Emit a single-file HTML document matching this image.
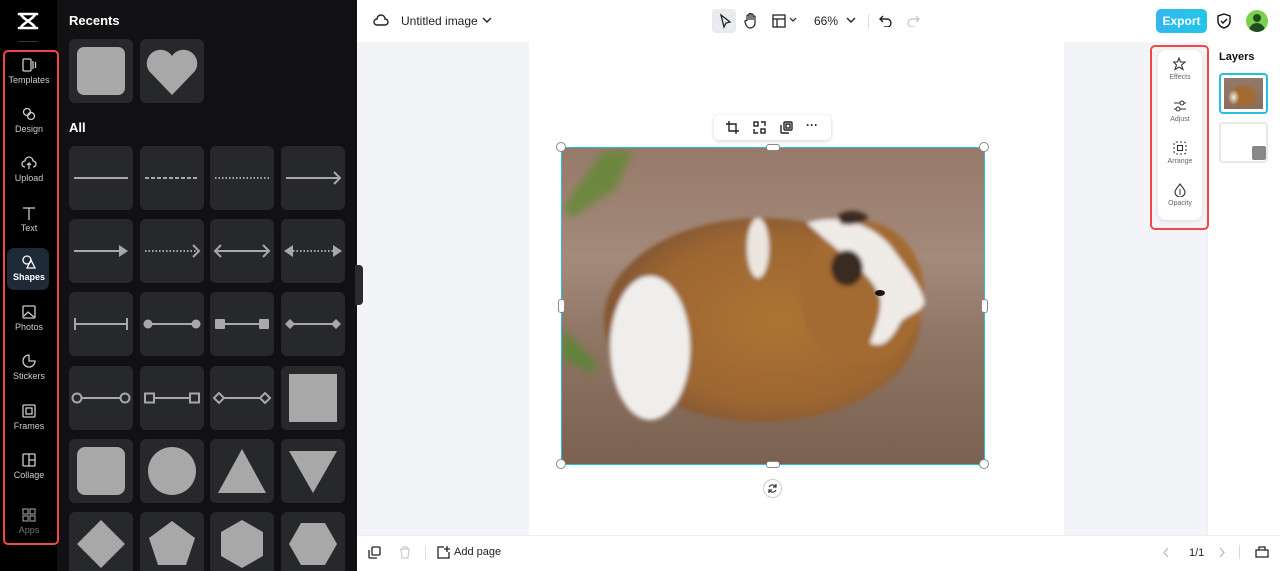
<!DOCTYPE html><html><head><style>
*{margin:0;padding:0;box-sizing:border-box}
html,body{width:1280px;height:571px;overflow:hidden}
body{font-family:"Liberation Sans",sans-serif;background:#f2f4f7;position:relative}
.a{position:absolute}
.rail{left:0;top:0;width:57px;height:571px;background:#000}
.panel{left:57px;top:0;width:300px;height:571px;background:#111113}
.ri{position:absolute;left:4px;width:50px;text-align:center;color:#ccc;font-size:9px}
.ri svg{display:block;margin:0 auto 2px}
.tile{position:absolute;width:64px;height:64px;background:#27282b;border-radius:6px;overflow:hidden}
.g{fill:#a8a8a8}
.sw{stroke:#a8a8a8;stroke-width:2;fill:none}
.tool{color:#666;font-size:7px;text-align:center;position:absolute;left:0;width:44px}
.tool svg{display:block;margin:0 auto 3px}
</style></head><body>
<div class="a rail"></div>
<div class="a panel"></div>
<svg class="a" style="left:16px;top:11px" width="24" height="20" viewBox="0 0 24 20"><path d="M3 3h18M3 17h18M5 3c0 4 14 10 14 14M19 3c0 4-14 10-14 14" stroke="#fff" stroke-width="2.6" fill="none" stroke-linecap="round"/></svg>
<div class="a" style="left:18px;top:41px;width:20px;height:1px;background:#333"></div>
<div class="a" style="left:3px;top:50px;width:56px;height:495px;border:2.5px solid #f04848;border-radius:5px"></div>
<div class="a" style="left:7px;top:248px;width:42px;height:42px;background:#1e2a38;border-radius:7px"></div>
<div class="ri" style="top:57px"><svg width="16" height="16"><rect x="2" y="2" width="8" height="12" rx="1" style="stroke:#ccc;fill:none;stroke-width:1.3"/><path d="M12 4v8M14.5 5v6" style="stroke:#ccc;stroke-width:1.3"/></svg>Templates</div>
<div class="ri" style="top:106px"><svg width="16" height="16"><circle cx="6" cy="6" r="3.5" style="stroke:#ccc;fill:none;stroke-width:1.3"/><circle cx="10" cy="10" r="3.5" style="stroke:#ccc;fill:none;stroke-width:1.3"/></svg>Design</div>
<div class="ri" style="top:155px"><svg width="16" height="16"><path d="M4 12a3 3 0 0 1 0-6a4 4 0 0 1 8 0a3 3 0 0 1 0 6M8 14V8M6 10l2-2 2 2" style="stroke:#ccc;fill:none;stroke-width:1.3"/></svg>Upload</div>
<div class="ri" style="top:205px"><svg width="16" height="16"><path d="M2 3h12M8 3v12" style="stroke:#ccc;fill:none;stroke-width:1.3"/></svg>Text</div>
<div class="ri" style="top:254px;color:#fff;font-weight:bold"><svg width="16" height="16"><circle cx="6" cy="6" r="4" style="stroke:#fff;fill:none;stroke-width:1.3"/><path d="M10 6l4 8H6z" style="stroke:#fff;fill:none;stroke-width:1.3"/></svg>Shapes</div>
<div class="ri" style="top:304px"><svg width="16" height="16"><rect x="2" y="2" width="12" height="12" rx="1" style="stroke:#ccc;fill:none;stroke-width:1.3"/><path d="M3 12l4-4 6 5" style="stroke:#ccc;fill:none;stroke-width:1.3"/></svg>Photos</div>
<div class="ri" style="top:353px"><svg width="16" height="16"><path d="M8 2a6 6 0 1 0 6 6h-6z" style="stroke:#ccc;fill:none;stroke-width:1.3"/></svg>Stickers</div>
<div class="ri" style="top:403px"><svg width="16" height="16"><rect x="2" y="2" width="12" height="12" rx="1" style="stroke:#ccc;fill:none;stroke-width:1.3"/><rect x="5" y="5" width="6" height="6" style="stroke:#ccc;fill:none;stroke-width:1.3"/></svg>Frames</div>
<div class="ri" style="top:452px"><svg width="16" height="16"><rect x="2" y="2" width="12" height="12" rx="1" style="stroke:#ccc;fill:none;stroke-width:1.3"/><path d="M8 2v12M8 8h6" style="stroke:#ccc;fill:none;stroke-width:1.3"/></svg>Collage</div>
<div class="ri" style="top:507px;color:#777"><svg width="16" height="16"><g style="stroke:#888;fill:none;stroke-width:1.3"><rect x="2" y="2" width="5" height="5"/><rect x="9" y="2" width="5" height="5"/><rect x="2" y="9" width="5" height="5"/><rect x="9" y="9" width="5" height="5"/></g></svg>Apps</div>

<div class="a" style="left:69px;top:13px;color:#fff;font-weight:bold;font-size:13px">Recents</div>
<div class="tile" style="left:69px;top:39px"><div class="a" style="left:8px;top:8px;width:48px;height:48px;background:#a8a8a8;border-radius:7px"></div></div>
<div class="tile" style="left:140px;top:39px"><svg width="64" height="64"><path class="g" d="M32 56L9 32A13 13 0 0 1 32 17A13 13 0 0 1 55 32z"/></svg></div>
<div class="a" style="left:69px;top:120px;color:#fff;font-weight:bold;font-size:13px">All</div>
<div class="tile" style="left:69px;top:146px"><svg width="64" height="64"><path class="sw" d="M5 32h54"/></svg></div>
<div class="tile" style="left:140px;top:146px"><svg width="64" height="64"><path class="sw" d="M5 32h54" stroke-dasharray="4 2"/></svg></div>
<div class="tile" style="left:210px;top:146px"><svg width="64" height="64"><path class="sw" d="M5 32h54" stroke-dasharray="1.5 2"/></svg></div>
<div class="tile" style="left:281px;top:146px"><svg width="64" height="64"><path class="sw" d="M5 32h54M53 26l6 6-6 6"/></svg></div>
<div class="tile" style="left:69px;top:219px"><svg width="64" height="64"><path class="sw" d="M5 32h48"/><path class="g" d="M50 26l9 6-9 6z"/></svg></div>
<div class="tile" style="left:140px;top:219px"><svg width="64" height="64"><path class="sw" d="M5 32h54" stroke-dasharray="1.5 2"/><path class="sw" d="M53 26l6 6-6 6"/></svg></div>
<div class="tile" style="left:210px;top:219px"><svg width="64" height="64"><path class="sw" d="M5 32h54M53 26l6 6-6 6M11 26l-6 6 6 6"/></svg></div>
<div class="tile" style="left:281px;top:219px"><svg width="64" height="64"><path class="sw" d="M12 32h40" stroke-dasharray="1.5 2"/><path class="g" d="M52 26l9 6-9 6zM12 26l-9 6 9 6z"/></svg></div>
<div class="tile" style="left:69px;top:292px"><svg width="64" height="64"><path class="sw" d="M6 32h52M6 26v12M58 26v12"/></svg></div>
<div class="tile" style="left:140px;top:292px"><svg width="64" height="64"><path class="sw" d="M8 32h48"/><circle class="g" cx="8" cy="32" r="4.5"/><circle class="g" cx="56" cy="32" r="4.5"/></svg></div>
<div class="tile" style="left:210px;top:292px"><svg width="64" height="64"><path class="sw" d="M8 32h48"/><rect class="g" x="5" y="27" width="10" height="10" rx="1"/><rect class="g" x="49" y="27" width="10" height="10" rx="1"/></svg></div>
<div class="tile" style="left:281px;top:292px"><svg width="64" height="64"><path class="sw" d="M8 32h48"/><path class="g" d="M4 32l5-5 5 5-5 5zM50 32l5-5 5 5-5 5z"/></svg></div>
<div class="tile" style="left:69px;top:366px"><svg width="64" height="64"><path class="sw" d="M12 32h40"/><circle class="sw" cx="8" cy="32" r="4.5"/><circle class="sw" cx="56" cy="32" r="4.5"/></svg></div>
<div class="tile" style="left:140px;top:366px"><svg width="64" height="64"><path class="sw" d="M14 32h36"/><rect class="sw" x="5" y="27.5" width="9" height="9"/><rect class="sw" x="50" y="27.5" width="9" height="9"/></svg></div>
<div class="tile" style="left:210px;top:366px"><svg width="64" height="64"><path class="sw" d="M14 32h36M4 32l5-5 5 5-5 5zM50 32l5-5 5 5-5 5z"/></svg></div>
<div class="tile" style="left:281px;top:366px"><div class="a" style="left:8px;top:8px;width:48px;height:48px;background:#a8a8a8"></div></div>
<div class="tile" style="left:69px;top:439px"><div class="a" style="left:8px;top:8px;width:48px;height:48px;background:#a8a8a8;border-radius:8px"></div></div>
<div class="tile" style="left:140px;top:439px"><svg width="64" height="64"><circle class="g" cx="32" cy="32" r="24"/></svg></div>
<div class="tile" style="left:210px;top:439px"><svg width="64" height="64"><path class="g" d="M32 10l24 44H8z"/></svg></div>
<div class="tile" style="left:281px;top:439px"><svg width="64" height="64"><path class="g" d="M8 12h48L32 54z"/></svg></div>
<div class="tile" style="left:69px;top:512px;height:59px;border-radius:6px 6px 0 0"><svg width="64" height="64"><path class="g" d="M32 8l24 24-24 24L8 32z"/></svg></div>
<div class="tile" style="left:140px;top:512px;height:59px;border-radius:6px 6px 0 0"><svg width="64" height="64"><path class="g" d="M32 9l23 17-9 27H18L9 26z"/></svg></div>
<div class="tile" style="left:210px;top:512px;height:59px;border-radius:6px 6px 0 0"><svg width="64" height="64"><path class="g" d="M32 8l21 12v24L32 56 11 44V20z"/></svg></div>
<div class="tile" style="left:281px;top:512px;height:59px;border-radius:6px 6px 0 0"><svg width="64" height="64"><path class="g" d="M20 11h24l12 21-12 21H20L8 32z"/></svg></div>
<div class="a" style="left:355px;top:265px;width:8px;height:40px;background:#2a2b2e;border-radius:0 4px 4px 0"></div>

<!-- top bar -->
<div class="a" style="left:357px;top:0;width:923px;height:42px;background:#fff"></div>
<svg class="a" style="left:373px;top:13px" width="16" height="16"><path d="M4 12a3 3 0 0 1 0-6a4 4 0 0 1 8 0a3 3 0 0 1 0 6z" stroke="#222" stroke-width="1.4" fill="none"/></svg>
<div class="a" style="left:401px;top:14px;font-size:12px;color:#222">Untitled image</div>
<svg class="a" style="left:482px;top:16px" width="10" height="8"><path d="M1 2l4 4 4-4" stroke="#222" stroke-width="1.4" fill="none"/></svg>
<div class="a" style="left:712px;top:9px;width:24px;height:24px;background:#e8eaee;border-radius:4px"></div>
<svg class="a" style="left:717px;top:13px" width="16" height="16"><path d="M4 2l9 7-4 1-2 4z" stroke="#222" stroke-width="1.3" fill="none"/></svg>
<svg class="a" style="left:743px;top:12px" width="16" height="17"><path d="M4 9V4a1 1 0 0 1 2 0v4V2.5a1 1 0 0 1 2 0V8V3a1 1 0 0 1 2 0v5V5a1 1 0 0 1 2 0v6c0 3-2 5-5 5-2 0-3-1-4-3L2 10a1 1 0 0 1 2-1z" stroke="#222" stroke-width="1.2" fill="none"/></svg>
<svg class="a" style="left:772px;top:14px" width="14" height="14"><rect x="1" y="1" width="12" height="12" stroke="#222" fill="none" stroke-width="1.3"/><path d="M1 5h12M5 5v8" stroke="#222" stroke-width="1.3"/></svg>
<svg class="a" style="left:789px;top:17px" width="8" height="6"><path d="M1 1l3 3 3-3" stroke="#222" stroke-width="1.2" fill="none"/></svg>
<div class="a" style="left:814px;top:14px;font-size:12px;color:#222">66%</div>
<svg class="a" style="left:846px;top:17px" width="10" height="7"><path d="M1 1l4 4 4-4" stroke="#222" stroke-width="1.4" fill="none"/></svg>
<div class="a" style="left:868px;top:14px;width:1px;height:14px;background:#ddd"></div>
<svg class="a" style="left:879px;top:14px" width="14" height="13"><path d="M4 2L1 5l3 3M1 5h7a4 4 0 0 1 0 8H5" stroke="#222" stroke-width="1.4" fill="none"/></svg>
<svg class="a" style="left:906px;top:14px" width="14" height="13"><path d="M10 2l3 3-3 3M13 5H6a4 4 0 0 0 0 8h3" stroke="#ccc" stroke-width="1.4" fill="none"/></svg>
<div class="a" style="left:1156px;top:9px;width:51px;height:24px;background:linear-gradient(90deg,#33b7f0,#22c6e6);border-radius:5px;color:#fff;font-weight:bold;font-size:12px;text-align:center;line-height:24px">Export</div>
<svg class="a" style="left:1217px;top:13px" width="14" height="16"><path d="M7 1l6 2v5c0 4-3 6-6 7-3-1-6-3-6-7V3z M4 8l2 2 4-4" stroke="#111" stroke-width="1.4" fill="none"/></svg>
<div class="a" style="left:1246px;top:10px;width:22px;height:22px;border-radius:50%;background:#7ccf4a;overflow:hidden"><div class="a" style="left:7px;top:4px;width:8px;height:8px;border-radius:50%;background:#1f4d1f"></div><div class="a" style="left:3px;top:13px;width:16px;height:12px;border-radius:8px 8px 0 0;background:#1f4d1f"></div></div>

<!-- page -->
<div class="a" style="left:529px;top:42px;width:535px;height:493px;background:#fff"></div>
<svg class="a" style="left:562px;top:148px" width="422" height="316" viewBox="0 0 422 316">
<defs>
<linearGradient id="bg" x1="0" y1="0" x2="0" y2="1"><stop offset="0" stop-color="#967a6a"/><stop offset=".35" stop-color="#a48a7b"/><stop offset=".6" stop-color="#8f7564"/><stop offset="1" stop-color="#7a6150"/></linearGradient>
<radialGradient id="bd" cx=".55" cy=".5" r=".6"><stop offset="0" stop-color="#ad7433"/><stop offset=".7" stop-color="#9c6630"/><stop offset="1" stop-color="#7a5030"/></radialGradient>
<filter id="bl"><feGaussianBlur stdDeviation="4"/></filter>
<filter id="b2"><feGaussianBlur stdDeviation="2"/></filter>
</defs>
<rect width="422" height="316" fill="url(#bg)"/>
<g filter="url(#bl)"><path d="M0 60L40 5 70 0 55 40 10 70z" fill="#5a8a2a" opacity=".7"/><path d="M0 180l35 35-5 10-30-15z" fill="#4f8a2a" opacity=".7"/></g>
<g filter="url(#b2)">
<ellipse cx="200" cy="172" rx="158" ry="102" fill="url(#bd)"/>
<ellipse cx="300" cy="145" rx="62" ry="72" fill="#a36a30"/>
<ellipse cx="88" cy="200" rx="40" ry="72" fill="#f0eeec"/>
<ellipse cx="196" cy="100" rx="11" ry="30" fill="#ece6df"/>
<path d="M245 75c35-12 70 5 85 25 15 20 30 40 33 55-5 10-20 12-25 20-10 20-20 25-30 20 5-15 12-30 10-45-8-25-35-40-73-75z" fill="#efebe6"/>
<ellipse cx="285" cy="120" rx="16" ry="18" fill="#3b2a22"/>
<path d="M275 68c10-8 25-6 32 2-8 6-18 8-28 6z" fill="#3a2a20"/>
</g>
<ellipse cx="318" cy="145" rx="5" ry="3" fill="#1a120e"/>
</svg>
<div class="a" style="left:561px;top:147px;width:424px;height:318px;border:1.5px solid #25c0dc"></div>
<div class="a" style="left:556px;top:142px;width:10px;height:10px;border-radius:50%;background:#fff;border:1px solid #888"></div>
<div class="a" style="left:979px;top:142px;width:10px;height:10px;border-radius:50%;background:#fff;border:1px solid #888"></div>
<div class="a" style="left:556px;top:459px;width:10px;height:10px;border-radius:50%;background:#fff;border:1px solid #888"></div>
<div class="a" style="left:979px;top:459px;width:10px;height:10px;border-radius:50%;background:#fff;border:1px solid #888"></div>
<div class="a" style="left:766px;top:144px;width:14px;height:7px;border-radius:3px;background:#fff;border:1px solid #888"></div>
<div class="a" style="left:766px;top:461px;width:14px;height:7px;border-radius:3px;background:#fff;border:1px solid #888"></div>
<div class="a" style="left:558px;top:299px;width:7px;height:14px;border-radius:3px;background:#fff;border:1px solid #888"></div>
<div class="a" style="left:981px;top:299px;width:7px;height:14px;border-radius:3px;background:#fff;border:1px solid #888"></div>
<div class="a" style="left:763px;top:479px;width:19px;height:19px;border-radius:50%;background:#fff;border:1px solid #ccc"><svg class="a" style="left:3px;top:3px" width="11" height="11"><path d="M9 4a4 4 0 0 0-7 0M2 7a4 4 0 0 0 7 0M9 1v3H6M2 10V7h3" stroke="#333" stroke-width="1.2" fill="none"/></svg></div>
<div class="a" style="left:714px;top:115px;width:117px;height:25px;background:#fff;border-radius:5px;box-shadow:0 1px 4px rgba(0,0,0,.18)">
<svg class="a" style="left:12px;top:6px" width="13" height="13"><path d="M3 0v10h10M0 3h10v10" stroke="#222" stroke-width="1.4" fill="none"/></svg>
<svg class="a" style="left:39px;top:6px" width="13" height="13"><g stroke="#222" stroke-width="1.4" fill="none"><rect x="1" y="1" width="4" height="4"/><rect x="8" y="8" width="4" height="4"/><path d="M8 1h4v4M1 8v4h4"/></g></svg>
<svg class="a" style="left:66px;top:6px" width="13" height="13"><g stroke="#222" stroke-width="1.4" fill="none"><rect x="4" y="1" width="8" height="8" rx="1"/><path d="M1 4v7a1 1 0 0 0 1 1h7"/><rect x="6" y="3" width="4" height="4"/></g></svg>
<div class="a" style="left:92px;top:3px;font-weight:bold;font-size:12px;color:#222">···</div></div>

<!-- right tools -->
<div class="a" style="left:1207px;top:42px;width:73px;height:493px;background:#fff;border-left:1px solid #eee"></div>
<div class="a" style="left:1158px;top:50px;width:44px;height:170px;background:#fff;border-radius:8px;box-shadow:0 1px 4px rgba(0,0,0,.1)"></div>
<div class="a" style="left:1150px;top:45px;width:59px;height:185px;border:2.5px solid #f04848;border-radius:5px"></div>
<div class="a" style="left:1158px;top:57px;width:44px">
<div class="tool" style="top:0"><svg width="14" height="14"><path d="M6 1l1.5 4 4.5 0-3.5 3 1.5 4.5L6 10 2 12.5 3.5 8 0.5 5h4z" stroke="#333" stroke-width="1.1" fill="none"/></svg>Effects</div>
<div class="tool" style="top:42px"><svg width="14" height="14"><path d="M1 4h12M1 10h12" stroke="#333" stroke-width="1.1"/><circle cx="9" cy="4" r="2" fill="#fff" stroke="#333" stroke-width="1.1"/><circle cx="5" cy="10" r="2" fill="#fff" stroke="#333" stroke-width="1.1"/></svg>Adjust</div>
<div class="tool" style="top:84px"><svg width="14" height="14"><rect x="1" y="1" width="12" height="12" rx="2" stroke="#333" stroke-width="1.1" fill="none" stroke-dasharray="2 2"/><rect x="4.5" y="4.5" width="5" height="5" stroke="#333" stroke-width="1.1" fill="none"/></svg>Arrange</div>
<div class="tool" style="top:126px"><svg width="14" height="14"><path d="M7 1c3 4 5 6 5 8a5 5 0 0 1-10 0c0-2 2-4 5-8z" stroke="#333" stroke-width="1.1" fill="none"/><path d="M7 6v6" stroke="#333" stroke-width="1"/></svg>Opacity</div></div>
<div class="a" style="left:1219px;top:51px;font-size:11px;font-weight:bold;color:#111">Layers</div>
<div class="a" style="left:1219px;top:73px;width:49px;height:41px;border:2px solid #25c0dc;border-radius:4px;padding:3px"><div style="width:100%;height:100%;background:radial-gradient(ellipse 15% 25% at 25% 62%,#eee,transparent),radial-gradient(ellipse 40% 40% at 50% 58%,#a06a30 60%,transparent),linear-gradient(180deg,#94796a,#8a6e5e)"></div></div>
<div class="a" style="left:1219px;top:122px;width:49px;height:41px;border:2px solid #e6e8eb;border-radius:4px;background:#fff"><div class="a" style="left:31px;top:22px;width:14px;height:14px;background:#888;border-radius:2px"></div></div>

<!-- bottom bar -->
<div class="a" style="left:357px;top:535px;width:923px;height:36px;background:#fff;border-top:1px solid #eee"></div>
<svg class="a" style="left:368px;top:546px" width="13" height="13"><g stroke="#222" stroke-width="1.3" fill="none"><rect x="4" y="1" width="8" height="8" rx="1"/><path d="M1 4v7a1 1 0 0 0 1 1h7"/></g></svg>
<svg class="a" style="left:399px;top:546px" width="12" height="13"><path d="M1 3h10M4 3V1h4v2M2 3l1 9h6l1-9" stroke="#ccc" stroke-width="1.2" fill="none"/></svg>
<div class="a" style="left:425px;top:546px;width:1px;height:14px;background:#ddd"></div>
<svg class="a" style="left:437px;top:546px" width="13" height="13"><path d="M7 1H1v11h11V6M10 0v6M7 3h6" stroke="#222" stroke-width="1.3" fill="none"/></svg>
<div class="a" style="left:454px;top:546px;font-size:11px;color:#222">Add page</div>
<svg class="a" style="left:1162px;top:547px" width="8" height="11"><path d="M6 1L2 5.5 6 10" stroke="#bbb" stroke-width="1.3" fill="none"/></svg>
<div class="a" style="left:1189px;top:547px;font-size:11px;color:#222">1/1</div>
<svg class="a" style="left:1218px;top:547px" width="8" height="11"><path d="M2 1l4 4.5L2 10" stroke="#bbb" stroke-width="1.3" fill="none"/></svg>
<div class="a" style="left:1239px;top:545px;width:1px;height:14px;background:#ddd"></div>
<svg class="a" style="left:1255px;top:545px" width="14" height="13"><path d="M1 5h12v7H1zM4 5V2h6v3" stroke="#222" stroke-width="1.3" fill="none"/></svg>
</body></html>
